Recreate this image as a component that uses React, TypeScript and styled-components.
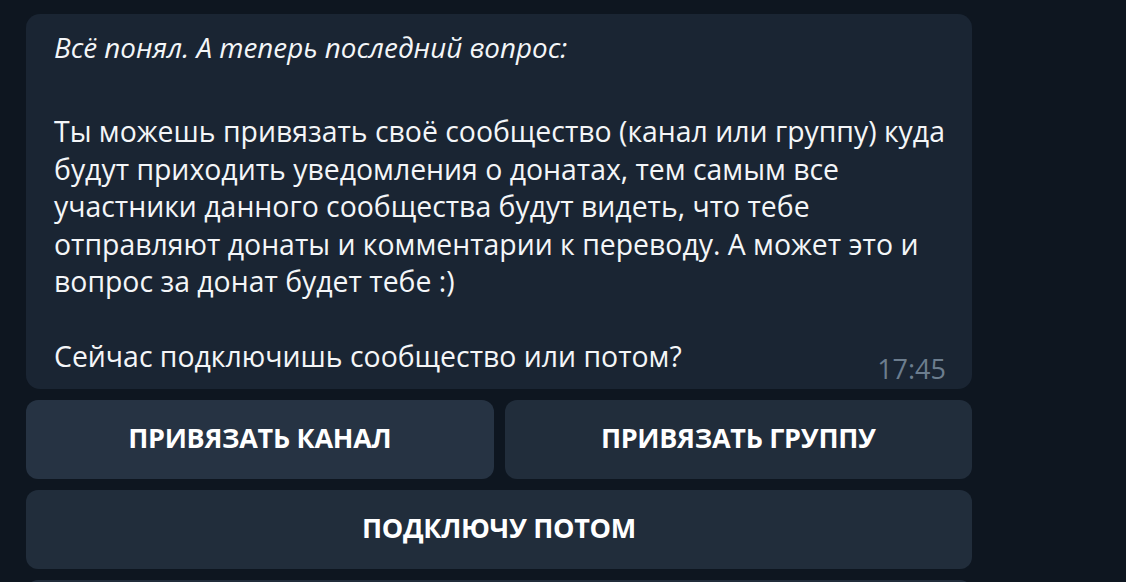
import styled, { createGlobalStyle } from "styled-components";

const GlobalStyle = createGlobalStyle`
  html, body {
    margin: 0;
    padding: 0;
    background: #0e1620;
    overflow: hidden;
  }
  body {
    font-family: "Open Sans", "Noto Sans", sans-serif;
    -webkit-font-smoothing: antialiased;
  }
`;

const Chat = styled.div`
  width: 946px;
  padding: 14px 0 0 26px;
  display: flex;
  flex-direction: column;
  gap: 11px;
`;

const Bubble = styled.div`
  box-sizing: border-box;
  height: 375px;
  background: #1a2533;
  border-radius: 14px;
  padding: 15px 26px 0 28px;
  color: #f4f6f8;
  line-height: 37.5px;
  display: flex;
  flex-direction: column;
`;

const Paragraph = styled.p<{ $italic?: boolean }>`
  margin: 0;
  white-space: nowrap;
  font-style: ${({ $italic }) => ($italic ? "italic" : "normal")};
  font-size: ${({ $italic }) => ($italic ? "27.8px" : "28.4px")};
`;

const Gap = styled.div<{ $size: number }>`
  height: ${({ $size }) => $size}px;
  flex: none;
`;

const LastLine = styled.div`
  display: flex;
  justify-content: space-between;
  align-items: baseline;
`;

const Time = styled.span`
  color: #6c7d8e;
  font-size: 27px;
  position: relative;
  top: 12px;
`;

const Keyboard = styled.div`
  display: grid;
  grid-template-columns: 1fr 1fr;
  gap: 11px;
`;

const KeyButton = styled.button<{ $wide?: boolean; $hover?: boolean }>`
  grid-column: ${({ $wide }) => ($wide ? "1 / span 2" : "auto")};
  height: 79px;
  border: none;
  border-radius: 12px;
  background: ${({ $hover }) => ($hover ? "#263343" : "#212d3b")};
  color: #ffffff;
  font-family: "Open Sans", "Noto Sans", sans-serif;
  font-weight: 700;
  font-size: 27px;
  letter-spacing: -0.3px;
  cursor: pointer;
  padding: 0 0 4px;
`;

export default function App() {
  return (
    <>
      <GlobalStyle />
      <Chat>
        <Bubble>
          <Paragraph $italic>Всё понял. А теперь последний вопрос:</Paragraph>
          <Gap $size={46.5} />
          <Paragraph>
            Ты можешь привязать своё сообщество (канал или группу) куда
            <br />
            будут приходить уведомления о донатах, тем самым все
            <br />
            участники данного сообщества будут видеть, что тебе
            <br />
            отправляют донаты и комментарии к переводу. А может это и
            <br />
            вопрос за донат будет тебе :)
          </Paragraph>
          <Gap $size={37.5} />
          <LastLine>
            <Paragraph>Сейчас подключишь сообщество или потом?</Paragraph>
            <Time>17:45</Time>
          </LastLine>
        </Bubble>
        <Keyboard>
          <KeyButton $hover>ПРИВЯЗАТЬ КАНАЛ</KeyButton>
          <KeyButton>ПРИВЯЗАТЬ ГРУППУ</KeyButton>
          <KeyButton $wide>ПОДКЛЮЧУ ПОТОМ</KeyButton>
          <KeyButton $wide aria-label="ещё" />
        </Keyboard>
      </Chat>
    </>
  );
}
